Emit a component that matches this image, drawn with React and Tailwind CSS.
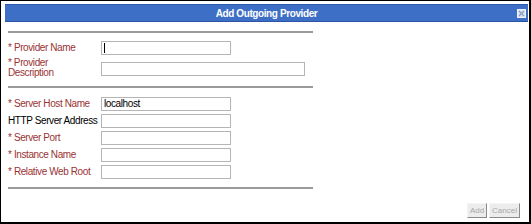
import React from 'react';

const font = { fontFamily: 'Tahoma, "Liberation Sans", Arial, sans-serif' };

function Field({ label, required, width = 'w-[130px]', value, caret }) {
  return (
    <div className="flex items-center h-[14px]">
      <div className={`w-[93px] shrink-0 whitespace-nowrap leading-[14px] ${required ? 'text-[#993333]' : 'text-black'}`}>
        {required ? '* ' : ''}{label}
      </div>
      <div className={`${width} h-[14px] border border-[#b5b5b5] bg-white flex items-center pl-[2px] text-black leading-none`}>
        {caret && <span className="w-px h-[10px] bg-black" />}
        {value}
      </div>
    </div>
  );
}

export default function App() {
  return (
    <div
      style={font}
      className="w-[531px] h-[224px] bg-white border-t border-l border-r-2 border-b-2 border-black pt-[3px] pl-[4px] pr-[1px] text-[10px] tracking-[-0.4px] flex flex-col"
    >
      {/* Title bar */}
      <div className="relative h-[18px] bg-[#3d6fc6] border-t border-[#2e5bb0] border-b border-b-[#2a55a6] flex items-center justify-center">
        <span className="text-white font-bold text-[10px] tracking-[-0.4px]">Add Outgoing Provider</span>
        <div className="absolute right-[2px] top-[4px] w-[9px] h-[9px] bg-[#dbe4f4] border border-[#eef3fb] flex items-center justify-center">
          <svg width="7" height="7" viewBox="0 0 7 7">
            <path d="M1 1 L6 6 M6 1 L1 6" stroke="#8a9bbd" strokeWidth="1.2" />
          </svg>
        </div>
      </div>

      <div className="pl-[3px] flex flex-col flex-1">
        <div className="mt-[9px] w-[305px] h-[2px] bg-[#9a9a9a]" />

        <div className="pt-[8px] flex flex-col">
          <Field label="Provider Name" required caret />
          <div className="flex items-start mt-[3px]">
            <div className="w-[93px] shrink-0 leading-[10px] text-[#993333]">
              * Provider<br />Description
            </div>
            <div className="w-[204px] h-[14px] mt-[4px] border border-[#b5b5b5] bg-white" />
          </div>
        </div>

        <div className="mt-[8px] w-[305px] h-[2px] bg-[#9a9a9a]" />

        <div className="pt-[9px] flex flex-col gap-[3px]">
          <Field label="Server Host Name" required value="localhost" />
          <Field label="HTTP Server Address" />
          <Field label="Server Port" required />
          <Field label="Instance Name" required />
          <Field label="Relative Web Root" required />
        </div>

        <div className="mt-[8px] w-[305px] h-[2px] bg-[#9a9a9a]" />

        <div className="mt-[14px] flex justify-end gap-[2px] pr-[8px]">
          <button className="w-[20px] h-[15px] bg-[#ececec] text-[#a8a8a8] text-[8px] tracking-normal border border-t-[#f4f4f4] border-l-[#f4f4f4] border-r-[#8a8a8a] border-b-[#8a8a8a] leading-none">
            Add
          </button>
          <button className="w-[31px] h-[15px] bg-[#ececec] text-[#a8a8a8] text-[8px] tracking-normal border border-t-[#f4f4f4] border-l-[#f4f4f4] border-r-[#8a8a8a] border-b-[#8a8a8a] leading-none">
            Cancel
          </button>
        </div>
      </div>
    </div>
  );
}
